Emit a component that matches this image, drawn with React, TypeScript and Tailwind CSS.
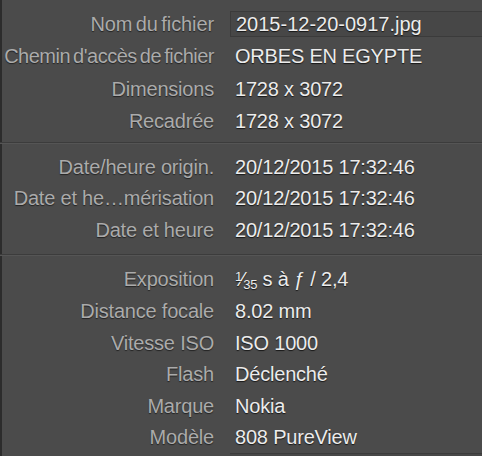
const groups: { label: string; value: React.ReactNode; tight?: string }[][] = [
  [
    { label: "Nom du fichier", value: "2015-12-20-0917.jpg", tight: "tracking-[-0.1px] [word-spacing:-2px]" },
    { label: "Chemin d'accès de fichier", value: "ORBES EN EGYPTE", tight: "tracking-[-0.5px] [word-spacing:-2px]" },
    { label: "Dimensions", value: "1728 x 3072" },
    { label: "Recadrée", value: "1728 x 3072" },
  ],
  [
    { label: "Date/heure origin.", value: "20/12/2015 17:32:46" },
    { label: "Date et he…mérisation", value: "20/12/2015 17:32:46" },
    { label: "Date et heure", value: "20/12/2015 17:32:46" },
  ],
  [
    {
      label: "Exposition",
      value: (
        <span>
          <span className="relative -top-[5px] text-[13px]">1</span>
          <span className="-mx-[1px]">⁄</span>
          <span className="relative top-[3px] text-[13px]">35</span> s à ƒ / 2,4
        </span>
      ),
    },
    { label: "Distance focale", value: "8.02 mm" },
    { label: "Vitesse ISO", value: "ISO 1000" },
    { label: "Flash", value: "Déclenché" },
    { label: "Marque", value: "Nokia" },
    { label: "Modèle", value: "808 PureView" },
  ],
];

const Row = ({ label, value, tight, h, boxed }: { label: string; value: React.ReactNode; tight?: string; h: string; boxed?: boolean }) => (
  <div className={`flex items-center ${h}`}>
    <div
      className={`w-[214px] shrink-0 text-right whitespace-nowrap text-[#ababab] [text-shadow:0_1px_1px_rgba(0,0,0,0.55)] ${
        tight ?? "tracking-[-0.2px]"
      }`}
    >
      {label}
    </div>
    {boxed ? (
      <div className="ml-4 flex h-[26px] w-[270px] shrink-0 items-center border border-[#3b3b3b] bg-[#474747] pl-[5px] text-[#ececec] whitespace-nowrap [text-shadow:0_1px_1px_rgba(0,0,0,0.7)]">
        {value}
      </div>
    ) : (
      <div className="ml-[21px] whitespace-nowrap text-[#ececec] tracking-[-0.2px] [text-shadow:0_1px_1px_rgba(0,0,0,0.7)]">
        {value}
      </div>
    )}
  </div>
);

export default function App() {
  return (
    <div className="flex h-[456px] w-[482px] overflow-hidden bg-[#4b4b4b] font-['Liberation_Sans',Arial,sans-serif] text-[20px]">
      <div className="w-[2px] shrink-0 bg-[#2c2c2c]" />
      <div className="flex flex-1 flex-col -ml-[2px]">
        <div className="pt-2 pb-[5px]">
          {groups[0].map((r, i) => (
            <Row key={r.label} {...r} h="h-[32.3px]" boxed={i === 0} />
          ))}
        </div>
        <div className="border-t border-[#3c3c3c] shadow-[0_1px_0_#555555]" />
        <div className="pt-[8px] pb-[8px]">
          {groups[1].map((r) => (
            <Row key={r.label} {...r} h="h-[31.5px]" />
          ))}
        </div>
        <div className="border-t border-[#3c3c3c] shadow-[0_1px_0_#555555]" />
        <div className="pt-[9px]">
          {groups[2].map((r) => (
            <Row key={r.label} {...r} h="h-[31.6px]" />
          ))}
        </div>
        <div className="ml-[230px] h-[4px] w-[270px] shrink-0 border-t border-[#3b3b3b] bg-[#474747]" />
      </div>
    </div>
  );
}
